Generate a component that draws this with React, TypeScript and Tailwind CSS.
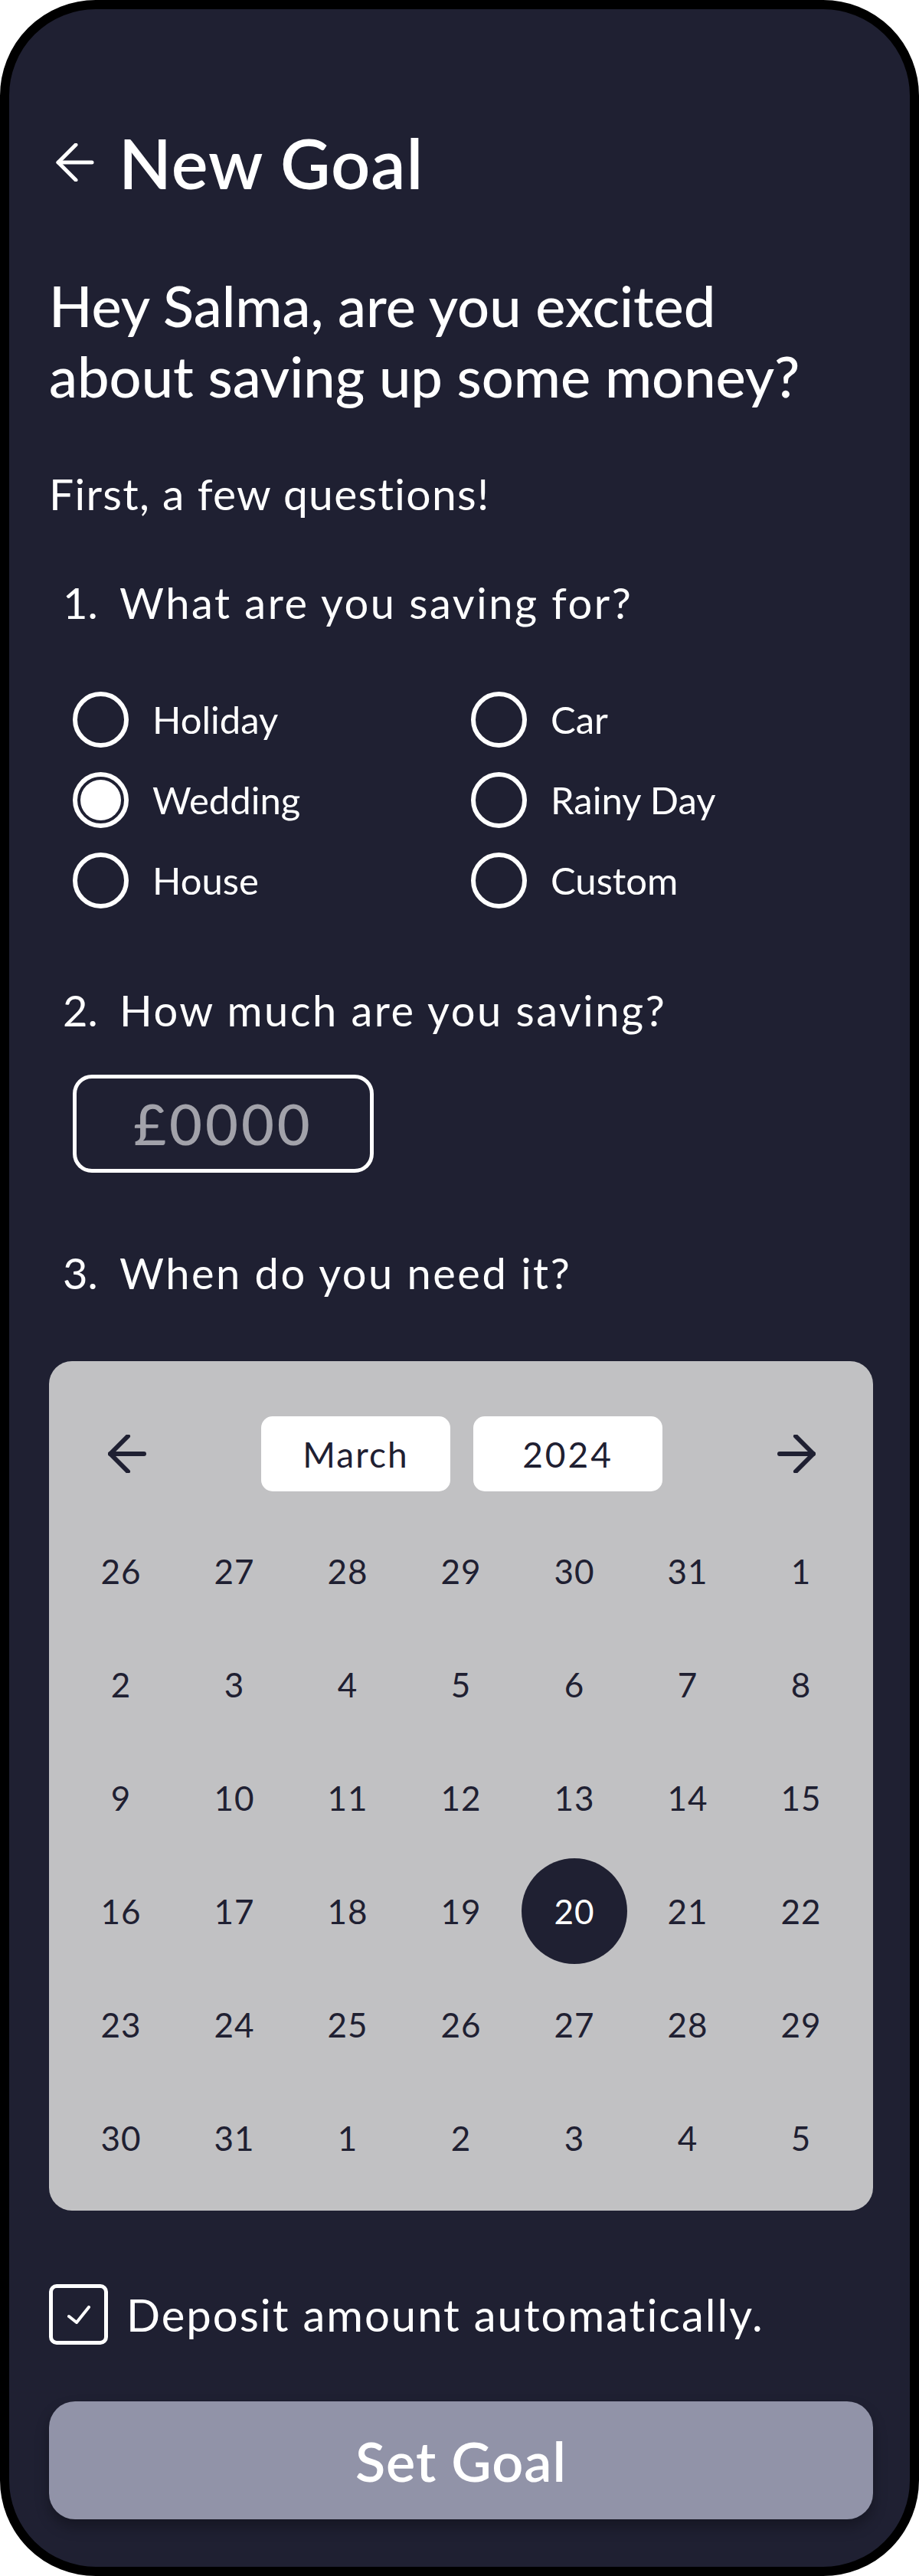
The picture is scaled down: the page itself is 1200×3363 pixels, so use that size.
import {useState} from "react";

const options = [
    ["Holiday", "Car"],
    ["Wedding", "Rainy Day"],
    ["House", "Custom"],
]

const weeks = [
    [26, 27, 28, 29, 30, 31, 1],
    [2, 3, 4, 5, 6, 7, 8],
    [9, 10, 11, 12, 13, 14, 15],
    [16, 17, 18, 19, 20, 21, 22],
    [23, 24, 25, 26, 27, 28, 29],
    [30, 31, 1, 2, 3, 4, 5],
]

const Arrow = ({dir, stroke, width}: {dir: "left" | "right", stroke: number, width: number}) => (
    <svg width={width} height={width} viewBox="0 0 50 50" fill="none"
         stroke="currentColor" strokeWidth={stroke} strokeLinecap="round" strokeLinejoin="round"
         className={dir === "right" ? "rotate-180" : ""}>
        <path d="M26 2 3 25l23 23"/>
        <path d="M3 25h44"/>
    </svg>
)

const Radio = ({label, checked, onClick}: {label: string, checked: boolean, onClick: () => void}) => (
    <button onClick={onClick} className="flex items-center gap-[31px] h-[73px] text-left">
        <span className="
            w-[73px] h-[73px] shrink-0
            rounded-full border-[6px] border-white
            flex items-center justify-center
        ">
            {checked && <span className="w-[53px] h-[53px] rounded-full bg-white"/>}
        </span>
        <span className="text-[49px] leading-[49px]">{label}</span>
    </button>
)

const Question = ({n, text, className}: {n: number, text: string, className: string}) => (
    <div className={"flex pl-[18px] text-[56px] leading-[56px] " + className}>
        <span className="w-[74px]">{n}.</span>
        <span className="tracking-[2.5px]">{text}</span>
    </div>
)

export default function App() {
    const [purpose, setPurpose] = useState("Wedding")
    const [day, setDay] = useState(20)
    const [auto, setAuto] = useState(true)

    return (
        <div className="min-h-screen bg-white">
            <div className="
                w-[1200px] h-[3363px]
                rounded-[125px] border-[12px] border-black
                bg-[#1f2032] text-white
                pt-[155px] pl-[52px] pr-[48px]
                flex flex-col
                font-[Lato,sans-serif]
            ">
                <div className="flex items-center h-[90px] pl-[9px]">
                    <Arrow dir="left" stroke={5} width={50}/>
                    <h1 className="ml-[32px] text-[90px] leading-[90px] font-semibold tracking-[1px]">New Goal</h1>
                </div>

                <p className="mt-[96px] text-[74px] leading-[92px] font-medium">
                    Hey Salma, are you excited<br/>about saving up some money?
                </p>

                <p className="mt-[79px] text-[57px] leading-[57px] tracking-[1.3px]">First, a few questions!</p>

                <Question n={1} text="What are you saving for?" className="mt-[86px]"/>

                <div className="mt-[88px] pl-[31px] grid grid-cols-[520px_1fr] gap-y-[32px]">
                    {options.flat().map(o =>
                        <Radio key={o} label={o} checked={purpose === o} onClick={() => setPurpose(o)}/>
                    )}
                </div>

                <Question n={2} text="How much are you saving?" className="mt-[105px]"/>

                <div className="
                    mt-[56px] ml-[31px]
                    w-[393px] h-[128px]
                    border-[5px] border-white rounded-[25px]
                    flex items-center justify-center
                    text-[74px] leading-[74px] font-medium text-[#a2a2aa] tracking-[4px]
                ">
                    £0000
                </div>

                <Question n={3} text="When do you need it?" className="mt-[103px]"/>

                <div className="
                    mt-[87px] h-[1109px]
                    rounded-[30px] bg-[#c1c1c3]
                    px-[20px] pt-[72px]
                    text-[#1f2032]
                ">
                    <div className="flex items-center justify-between h-[98px] pl-[57px] pr-[55px]">
                        <Arrow dir="left" stroke={6} width={50}/>
                        <div className="flex gap-[30px]">
                            <div className="w-[247px] h-[98px] rounded-[15px] bg-white flex items-center justify-center text-[46px] tracking-[2px]">
                                March
                            </div>
                            <div className="w-[247px] h-[98px] rounded-[15px] bg-white flex items-center justify-center text-[46px] tracking-[3px]">
                                2024
                            </div>
                        </div>
                        <Arrow dir="right" stroke={6} width={50}/>
                    </div>

                    <div className="mt-[30px] grid grid-cols-7">
                        {weeks.map((week, w) => week.map((d, i) => {
                            const current = !(w === 0 && i === 6) && !(w === 5 && i > 1)
                            const selected = current && d === day
                            return (
                                <div key={w + "-" + i} className="h-[148px] flex items-center justify-center">
                                    <button
                                        onClick={() => current && setDay(d)}
                                        className={
                                            "w-[138px] h-[138px] rounded-full flex items-center justify-center text-[44px] leading-[44px] tracking-[1px] " +
                                            (selected ? "bg-[#1f2032] text-white" : "")
                                        }
                                    >
                                        {d}
                                    </button>
                                </div>
                            )
                        }))}
                    </div>
                </div>

                <button onClick={() => setAuto(!auto)} className="mt-[96px] flex items-center gap-[24px] text-left">
                    <span className="
                        w-[77px] h-[79px] shrink-0
                        border-[5px] border-white rounded-[10px]
                        flex items-center justify-center
                    ">
                        {auto &&
                            <svg width="30" height="24" viewBox="0 0 30 24" fill="none" stroke="white"
                                 strokeWidth="4" strokeLinecap="round" strokeLinejoin="round">
                                <path d="M2 14l10 8L28 2"/>
                            </svg>
                        }
                    </span>
                    <span className="text-[58px] leading-[58px] tracking-[2px]">Deposit amount automatically.</span>
                </button>

                <button className="
                    mt-[74px] h-[154px]
                    rounded-[34px] bg-[#9193a8]
                    shadow-[0_10px_18px_rgba(0,0,0,0.3)]
                    text-[72px] font-semibold text-white tracking-[1px]
                ">
                    Set Goal
                </button>
            </div>
        </div>
    )
}
